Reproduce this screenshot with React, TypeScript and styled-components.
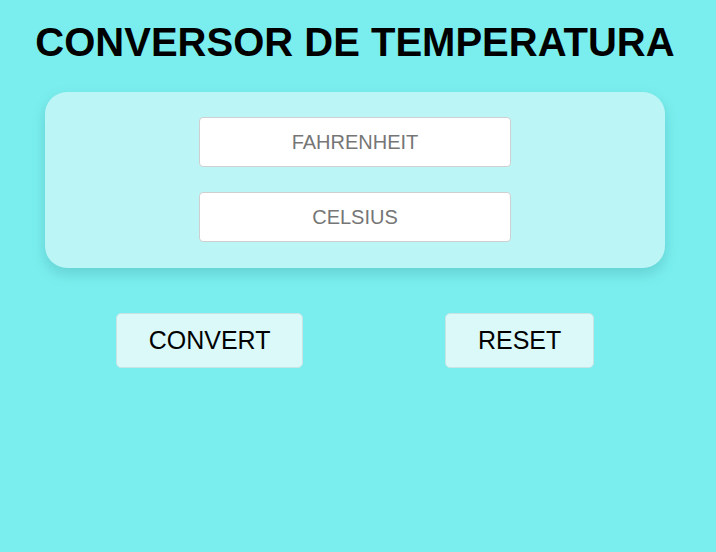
import React, {useState} from "react"
import styled, {createGlobalStyle} from "styled-components"

const GlobalStyle = createGlobalStyle`
  html, body {
    margin: 0;
    padding: 0;
    background-color: #7aeeee;
    font-family: "Liberation Sans", Arial, sans-serif;
  }
`

const Page = styled.div`
  display: flex;
  flex-direction: column;
  align-items: center;
  min-height: 552px;
  padding-right: 6px;
`

const Title = styled.h1`
  margin: 20px 0 27px;
  font-size: 40px;
  font-weight: bold;
  color: #000;
  line-height: 45px;
`

const Card = styled.div`
  width: 620px;
  box-sizing: border-box;
  padding: 25px 0 26px;
  display: flex;
  flex-direction: column;
  align-items: center;
  gap: 25px;
  background-color: #bbf5f5;
  border-radius: 22px;
  box-shadow: 0 6px 14px rgba(0, 80, 90, 0.18);
`

const Field = styled.input`
  width: 312px;
  height: 50px;
  box-sizing: border-box;
  border: 1px solid #cfcfcf;
  border-radius: 4px;
  background: #fff;
  text-align: center;
  font-family: "Liberation Sans", Arial, sans-serif;
  font-size: 20px;
  outline: none;

  &::placeholder {
    color: #767676;
  }
`

const Actions = styled.div`
  width: 620px;
  display: flex;
  justify-content: space-around;
  margin-top: 45px;
`

const Button = styled.button`
  height: 55px;
  padding: 0 32px;
  box-sizing: border-box;
  background-color: #dbf9f9;
  border: 1px solid #c8e4e4;
  border-radius: 5px;
  font-family: "Liberation Sans", Arial, sans-serif;
  font-size: 25px;
  color: #000;
  cursor: pointer;
`

export default function App() {
  const [fahrenheit, setFahrenheit] = useState("")
  const [celsius, setCelsius] = useState("")

  const convert = () => {
    if (fahrenheit !== "") {
      setCelsius((((parseFloat(fahrenheit) - 32) * 5) / 9).toFixed(2))
    } else if (celsius !== "") {
      setFahrenheit(((parseFloat(celsius) * 9) / 5 + 32).toFixed(2))
    }
  }

  return (
    <Page>
      <GlobalStyle />
      <Title>CONVERSOR DE TEMPERATURA</Title>
      <Card>
        <Field
          placeholder="FAHRENHEIT"
          value={fahrenheit}
          onChange={(e) => setFahrenheit(e.target.value)}
        />
        <Field
          placeholder="CELSIUS"
          value={celsius}
          onChange={(e) => setCelsius(e.target.value)}
        />
      </Card>
      <Actions>
        <Button onClick={convert}>CONVERT</Button>
        <Button onClick={() => { setFahrenheit(""); setCelsius("") }}>RESET</Button>
      </Actions>
    </Page>
  )
}
